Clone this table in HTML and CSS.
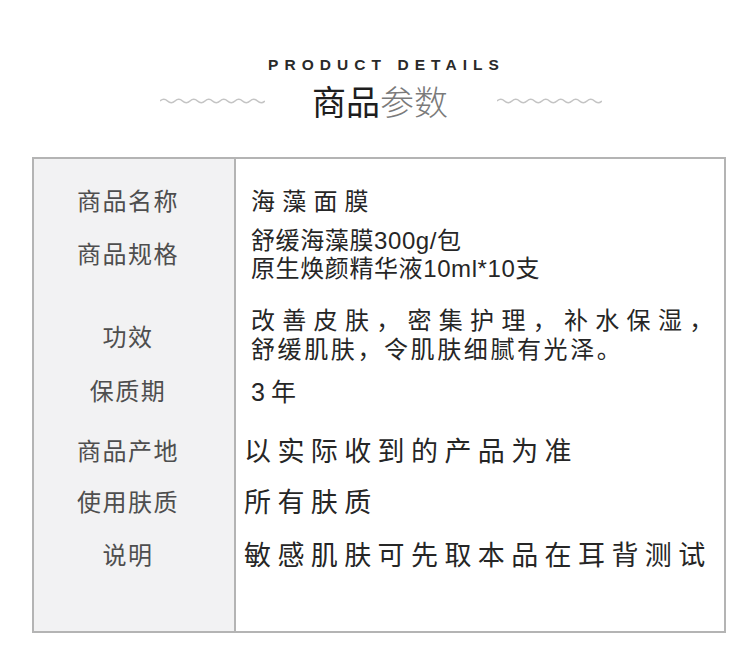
FILE: index.html
```html
<!DOCTYPE html>
<html lang="zh-CN">
<head>
<meta charset="utf-8">
<title>商品参数</title>
<link rel="stylesheet" href="styles.css">
</head>
<body>
<div class="page">
  <header class="head">
    <div class="en">PRODUCT DETAILS</div>
    <div class="title-row">
      <svg class="wave" width="105" height="8" viewBox="0 0 105 8"><path d="M0 4 q3.75 -3.5 7.5 0 t7.5 0 t7.5 0 t7.5 0 t7.5 0 t7.5 0 t7.5 0 t7.5 0 t7.5 0 t7.5 0 t7.5 0 t7.5 0 t7.5 0 t7.5 0" /></svg>
      <h1 class="title"><span class="t-dark">商品</span><span class="t-light">参数</span></h1>
      <svg class="wave" width="105" height="8" viewBox="0 0 105 8"><path d="M0 4 q3.75 -3.5 7.5 0 t7.5 0 t7.5 0 t7.5 0 t7.5 0 t7.5 0 t7.5 0 t7.5 0 t7.5 0 t7.5 0 t7.5 0 t7.5 0 t7.5 0 t7.5 0" /></svg>
    </div>
  </header>

  <section class="spec">
    <div class="row r1">
      <div class="label">商品名称</div>
      <div class="value v-name">海藻面膜</div>
    </div>
    <div class="row r2">
      <div class="label">商品规格</div>
      <div class="value v-spec">
        <div>舒缓海藻膜300g/包</div>
        <div>原生焕颜精华液10ml*10支</div>
      </div>
    </div>
    <div class="row r3">
      <div class="label label-low">功效</div>
      <div class="value v-effect">
        <div class="wide">改善皮肤，密集护理，补水保湿，</div>
        <div class="tight">舒缓肌肤，令肌肤细腻有光泽。</div>
      </div>
    </div>
    <div class="row r4">
      <div class="label">保质期</div>
      <div class="value v-year">3年</div>
    </div>
    <div class="row r5">
      <div class="label">商品产地</div>
      <div class="value v-big">以实际收到的产品为准</div>
    </div>
    <div class="row r6">
      <div class="label">使用肤质</div>
      <div class="value v-big">所有肤质</div>
    </div>
    <div class="row r7">
      <div class="label">说明</div>
      <div class="value v-big">敏感肌肤可先取本品在耳背测试</div>
    </div>
  </section>
</div>
</body>
</html>
```

FILE: styles.css
```css
* { box-sizing: border-box; }

html, body {
  margin: 0;
  padding: 0;
  background: #ffffff;
}

body {
  font-family: "Noto Sans CJK SC", "Noto Sans", sans-serif;
  color: #2b2b2b;
}

.page {
  width: 750px;
  height: 647px;
  padding-top: 55px;
}

.head {
  display: flex;
  flex-direction: column;
  align-items: center;
  padding-left: 12px;
}

.en {
  font-family: "Liberation Sans", Arial, sans-serif;
  font-weight: bold;
  font-size: 15.5px;
  line-height: 20px;
  letter-spacing: 6.05px;
  color: #2a2a2a;
  padding-left: 11px;
}

.title-row {
  display: flex;
  align-items: center;
  margin-top: 6px;
  height: 40px;
}

.wave {
  display: block;
  fill: none;
  stroke: #c4c4c4;
  stroke-width: 1.6;
}

.title {
  margin: 0 49px 0 47px;
  font-size: 34px;
  line-height: 40px;
  font-weight: 400;
  white-space: nowrap;
}

.t-dark { color: #1e1e1e; }
.t-light { color: #7a7a7a; font-weight: 300; }

.spec {
  margin: 36px 0 0 32px;
  width: 694px;
  height: 476px;
  border: 2px solid #b4b4b4;
  padding-top: 28px;
  background: linear-gradient(to right, #f2f2f3 0, #f2f2f3 200px, #b4b4b4 200px, #b4b4b4 202px, #ffffff 202px);
}

.row {
  display: flex;
  align-items: center;
}

.r2 { margin-top: 10px; }
.r3 { margin-top: 23px; }
.r4 { margin-top: 13px; }
.r5 { margin-top: 30px; }
.r6 { margin-top: 21px; }
.r7 { margin-top: 23px; }

.label {
  width: 200px;
  flex: none;
  text-align: center;
  padding-right: 12px;
  padding-bottom: 4px;
  font-size: 24px;
  line-height: 26px;
  letter-spacing: 1.5px;
  color: #4e4e4e;
}

.label-low { padding-top: 5px; }

.value {
  font-family: "Liberation Sans", "Noto Sans CJK SC", sans-serif;
  padding-left: 17px;
  color: #262626;
  white-space: nowrap;
}

.v-name {
  font-size: 24px;
  line-height: 30px;
  letter-spacing: 7.2px;
}

.v-spec {
  font-size: 24px;
  line-height: 28px;
  letter-spacing: 0.6px;
}

.v-effect {
  font-size: 24px;
  line-height: 29px;
}

.v-effect .wide { letter-spacing: 7.3px; }
.v-effect .tight { letter-spacing: 2.6px; }

.v-year {
  font-size: 25px;
  line-height: 30px;
  letter-spacing: 6px;
}

.v-big {
  padding-left: 10px;
  font-size: 27px;
  line-height: 30px;
  letter-spacing: 6.4px;
}
```
